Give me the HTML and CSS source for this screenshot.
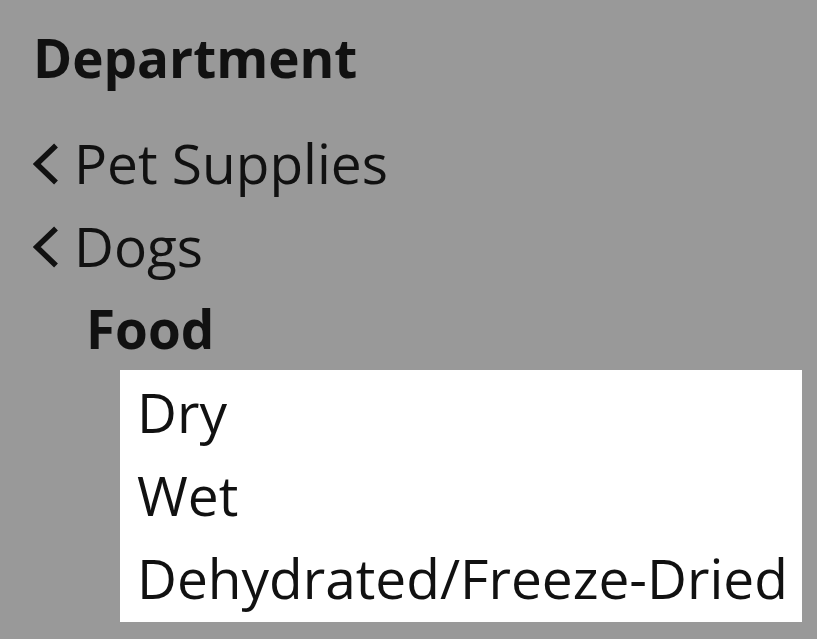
FILE: index.html
```html
<!DOCTYPE html>
<html lang="en">
<head>
<meta charset="utf-8">
<title>Department</title>
<link rel="stylesheet" href="styles.css">
</head>
<body>
<nav class="dept">
  <h2 class="dept-title">Department</h2>
  <ul class="crumbs">
    <li class="crumb"><svg class="chev" width="26" height="42" viewBox="0 0 26 42"><polyline points="23,2.5 3.8,21 23,39.5" fill="none" stroke="#111" stroke-width="5.5" stroke-linejoin="miter"/></svg><span>Pet Supplies</span></li>
    <li class="crumb"><svg class="chev" width="26" height="42" viewBox="0 0 26 42"><polyline points="23,2.5 3.8,21 23,39.5" fill="none" stroke="#111" stroke-width="5.5" stroke-linejoin="miter"/></svg><span>Dogs</span></li>
    <li class="current">Food</li>
  </ul>
  <ul class="subs">
    <li>Dry</li>
    <li>Wet</li>
    <li>Dehydrated/Freeze-Dried</li>
  </ul>
</nav>
</body>
</html>
```

FILE: styles.css
```css
html, body {
  margin: 0;
  padding: 0;
  background: #999999;
}
body {
  width: 817px;
  height: 639px;
  overflow: hidden;
  font-family: "Open Sans", Lato, sans-serif;
  color: #111;
  font-size: 55px;
  line-height: 83px;
}
.dept {
  padding: 16px 0 0 33px;
}
.dept-title {
  margin: 0;
  font-size: 53px;
  font-weight: 700;
  line-height: 83px;
}
.crumbs, .subs {
  list-style: none;
  margin: 0;
  padding: 0;
}
.crumbs {
  margin-top: 22px;
}
.crumb {
  white-space: nowrap;
}
.chev {
  display: inline-block;
  vertical-align: -1px;
  margin-right: 15px;
}
.current {
  font-weight: 700;
  font-size: 53px;
  padding-left: 53px;
}
.subs {
  margin: 0 0 0 87px;
  width: 682px;
  background: #fff;
  padding: 0 0 3px 17px;
  box-sizing: border-box;
}
.subs li {
  white-space: nowrap;
}
```
